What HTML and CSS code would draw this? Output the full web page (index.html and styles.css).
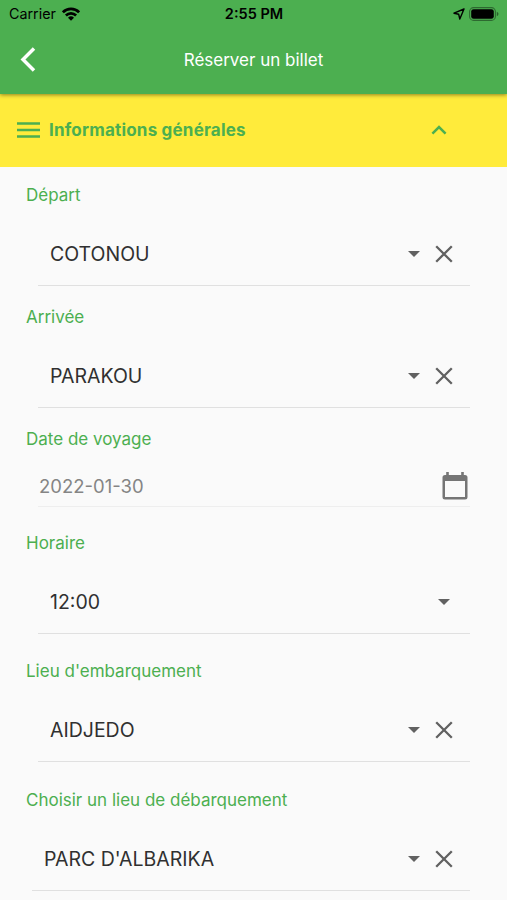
FILE: index.html
```html
<!DOCTYPE html>
<html lang="fr">
<head>
    <meta charset="UTF-8">
    <meta name="viewport" content="width=device-width, initial-scale=1.0">
    <title>Réserver un billet</title>
    <link rel="stylesheet" href="styles.css">
</head>
<body>
    <svg class="symbols" width="0" height="0">
        <symbol id="arrow" viewBox="0 0 12 6">
            <path d="M0 0h12L6 6z" fill="currentColor"/>
        </symbol>
        <symbol id="cross" viewBox="0 0 18 18">
            <path d="M1.2 1.2l15.6 15.6M16.8 1.2L1.2 16.8" stroke="currentColor" stroke-width="2.3" fill="none"/>
        </symbol>
    </svg>
    <header>
        <div class="status-bar">
            <div class="carrier">
                <span>Carrier</span>
                <svg width="18" height="14" viewBox="0 0 18 14">
                    <g fill="none" stroke="#000" stroke-width="2.7">
                        <path d="M.9 5.3a11.500 11.500 0 0 1 16.200 0"/>
                        <path d="M3.9 8.500a7.200 7.200 0 0 1 10.200 0"/>
                    </g>
                    <path d="M9 13.800l-3-3.100a4.300 4.300 0 0 1 6 0z"/>
                </svg>
            </div>
            <div class="clock">2:55 PM</div>
            <div class="indicators">
                <svg width="12" height="12" viewBox="0 0 12 12">
                    <path d="M11 1L1 5.200l4.700 1.100L6.800 11z" fill="none" stroke="#000" stroke-width="1.4" stroke-linejoin="round"/>
                </svg>
                <svg width="30" height="14" viewBox="0 0 30 14">
                    <rect x=".6" y=".6" width="25.8" height="12.8" rx="4" fill="none" stroke="#000" stroke-opacity=".4" stroke-width="1.1"/>
                    <rect x="2.2" y="2.2" width="22.6" height="9.6" rx="2.4"/>
                    <path d="M27.800 4.800c2.200.8 2.200 3.600 0 4.400z" fill-opacity=".45"/>
                </svg>
            </div>
        </div>
        <div class="nav-bar">
            <svg class="back" width="16" height="25" viewBox="0 0 16 25">
                <path d="M14 1.500L3 12.500l11 11" fill="none" stroke="#fff" stroke-width="3.5"/>
            </svg>
            <h1>Réserver un billet</h1>
        </div>
    </header>
    <div class="section-header">
        <svg width="23" height="16" viewBox="0 0 23 16">
            <path d="M0 1.500h23M0 8h23M0 14.500h23" stroke="currentColor" stroke-width="2.3"/>
        </svg>
        <h2>Informations générales</h2>
        <svg width="16" height="10" viewBox="0 0 16 10">
            <path d="M1.400 8.600L8 2l6.600 6.600" fill="none" stroke="currentColor" stroke-width="2.5"/>
        </svg>
    </div>
    <main>
        <div class="field">
            <div class="label">Départ</div>
            <div class="select">
                <span>COTONOU</span>
                <svg class="arrow"><use href="#arrow"/></svg>
                <svg class="cross"><use href="#cross"/></svg>
            </div>
        </div>
        <div class="field">
            <div class="label">Arrivée</div>
            <div class="select">
                <span>PARAKOU</span>
                <svg class="arrow"><use href="#arrow"/></svg>
                <svg class="cross"><use href="#cross"/></svg>
            </div>
        </div>
        <div class="field">
            <div class="label">Date de voyage</div>
            <div class="select date">
                <span>2022-01-30</span>
                <svg class="calendar" width="26" height="28" viewBox="0 0 26 28">
                    <path d="M4.200 0h2.600v3h12.400V0h2.600v3H23a2.500 2.500 0 0 1 2.500 2.500V25a2.500 2.500 0 0 1-2.500 2.500H3A2.500 2.500 0 0 1 .5 25V5.500A2.500 2.500 0 0 1 3 3h1.200zM3 9v16h20V9z" fill="currentColor" fill-rule="evenodd"/>
                </svg>
            </div>
        </div>
        <div class="field time">
            <div class="label">Horaire</div>
            <div class="select">
                <span>12:00</span>
                <svg class="arrow"><use href="#arrow"/></svg>
            </div>
        </div>
        <div class="field boarding">
            <div class="label">Lieu d'embarquement</div>
            <div class="select">
                <span>AIDJEDO</span>
                <svg class="arrow"><use href="#arrow"/></svg>
                <svg class="cross"><use href="#cross"/></svg>
            </div>
        </div>
        <div class="field landing">
            <div class="label">Choisir un lieu de débarquement</div>
            <div class="select">
                <span>PARC D'ALBARIKA</span>
                <svg class="arrow"><use href="#arrow"/></svg>
                <svg class="cross"><use href="#cross"/></svg>
            </div>
        </div>
    </main>
</body>
</html>
```

FILE: styles.css
```css
* {
    box-sizing: border-box;
}
body {
    font-family: Inter, "Liberation Sans", sans-serif;
    margin: 0;
    background-color: #fafafa;
    height: 900px;
    overflow: hidden;
}
svg {
    display: block;
    flex-shrink: 0;
}
.symbols {
    display: none;
}
header {
    position: relative;
    height: 94px;
    background-color: #4caf50;
    box-shadow: 0 1px 4px rgba(0, 0, 0, 0.45);
}
.status-bar {
    display: grid;
    grid-template-columns: 1fr auto 1fr;
    align-items: center;
    height: 27px;
    padding: 0 8px 0 9px;
}
.carrier {
    display: flex;
    align-items: center;
    gap: 6px;
    font-size: 14.3px;
}
.clock {
    font-size: 14.5px;
    font-weight: 600;
}
.indicators {
    display: flex;
    align-items: center;
    justify-content: flex-end;
    gap: 4px;
}
.nav-bar {
    display: grid;
    grid-template-columns: 1fr auto 1fr;
    align-items: center;
    height: 65px;
    padding: 0 20px;
}
h1 {
    margin: 0;
    color: white;
    font-size: 17px;
    font-weight: 400;
}
.section-header {
    display: flex;
    align-items: center;
    height: 73px;
    padding: 0 60px 1px 17px;
    background-color: #ffeb3b;
    color: #4caf50;
}
h2 {
    flex: 1;
    margin: 0 0 0 9px;
    font-size: 17px;
    font-weight: 700;
    letter-spacing: 0.2px;
}
main {
    padding: 12px 37px 0 26px;
}
.field {
    margin-bottom: 15px;
}
.label {
    height: 32px;
    line-height: 33px;
    color: #4caf50;
    font-size: 17px;
}
.select {
    display: flex;
    align-items: center;
    height: 64px;
    margin: 11px 0 0 12px;
    padding: 0 17px 0 12px;
    border-bottom: 1px solid #e0e0e0;
    color: #616161;
}
.select span {
    flex: 1;
    color: #303030;
    font-size: 19.5px;
}
.arrow {
    width: 12px;
    height: 6px;
    margin-right: 3px;
}
.cross {
    width: 18px;
    height: 18px;
    margin-left: 12px;
}
.date {
    height: 41px;
    padding: 0 2px 0 1px;
    border-bottom-color: #eeeeee;
    color: #757575;
}
.date span {
    color: #858585;
    font-size: 18.5px;
}
.time {
    margin-top: 20px;
}
.boarding {
    margin-top: 21px;
}
.landing {
    margin-top: 22px;
}
.landing .select {
    margin-left: 6px;
}
```
